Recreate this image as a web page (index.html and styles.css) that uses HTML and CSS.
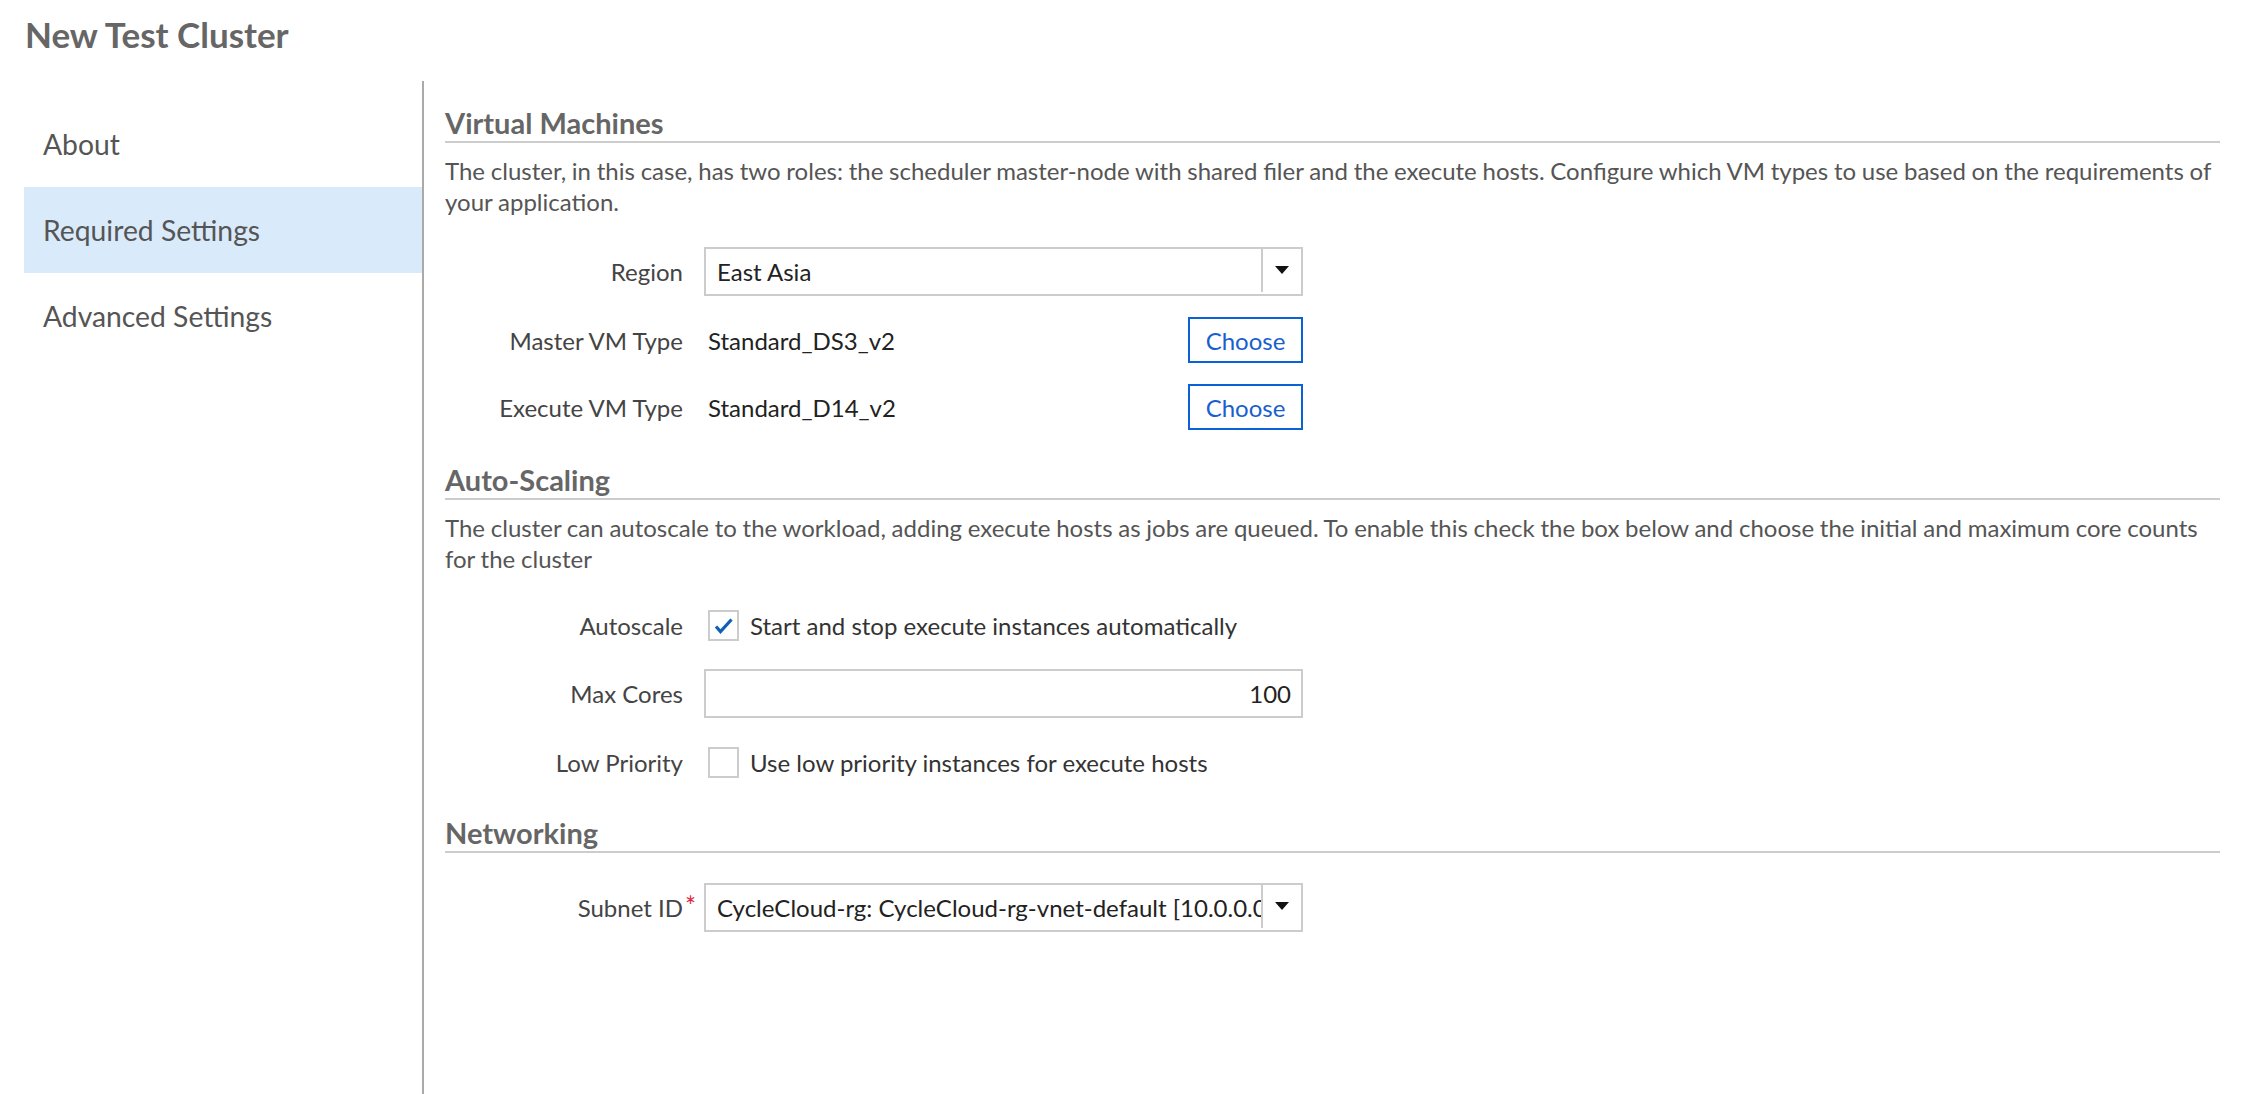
FILE: index.html
```html
<!DOCTYPE html>
<html lang="en">
<head>
<meta charset="utf-8">
<title>New Test Cluster</title>
<link rel="stylesheet" href="styles.css">
</head>
<body>
<div class="page">
  <header class="page-header">
    <h1 class="page-title">New Test Cluster</h1>
  </header>
  <div class="layout">
    <nav class="sidebar">
      <a class="nav-item">About</a>
      <a class="nav-item nav-item--active">Required Settings</a>
      <a class="nav-item">Advanced Settings</a>
    </nav>
    <main class="content">
      <section class="section">
        <h2 class="section-title">Virtual Machines</h2>
        <p class="section-desc">The cluster, in this case, has two roles: the scheduler master-node with shared filer and the execute hosts. Configure which VM types to use based on the requirements of your application.</p>
        <div class="form">
          <div class="field">
            <span class="field-label">Region</span>
            <div class="field-control">
              <div class="select">
                <span class="select-value">East Asia</span>
                <span class="select-toggle"><span class="caret"></span></span>
              </div>
            </div>
          </div>
          <div class="field">
            <span class="field-label">Master VM Type</span>
            <div class="field-control field-control--split">
              <span class="field-value">Standard_DS3_v2</span>
              <button class="btn" type="button">Choose</button>
            </div>
          </div>
          <div class="field">
            <span class="field-label">Execute VM Type</span>
            <div class="field-control field-control--split">
              <span class="field-value">Standard_D14_v2</span>
              <button class="btn" type="button">Choose</button>
            </div>
          </div>
        </div>
      </section>

      <section class="section">
        <h2 class="section-title">Auto-Scaling</h2>
        <p class="section-desc">The cluster can autoscale to the workload, adding execute hosts as jobs are queued. To enable this check the box below and choose the initial and maximum core counts for the cluster</p>
        <div class="form form--loose">
          <div class="field field--check">
            <span class="field-label">Autoscale</span>
            <div class="field-control">
              <span class="checkbox checkbox--checked">
                <svg viewBox="0 0 31 31" width="31" height="31" aria-hidden="true"><path d="M8 16.5 L12.5 21.5 L23.5 9.5" fill="none" stroke="#0f5fb5" stroke-width="3.2" stroke-linecap="butt" stroke-linejoin="miter"/></svg>
              </span>
              <span class="check-text">Start and stop execute instances automatically</span>
            </div>
          </div>
          <div class="field">
            <span class="field-label">Max Cores</span>
            <div class="field-control">
              <div class="input input--number">100</div>
            </div>
          </div>
          <div class="field field--check">
            <span class="field-label">Low Priority</span>
            <div class="field-control">
              <span class="checkbox"></span>
              <span class="check-text">Use low priority instances for execute hosts</span>
            </div>
          </div>
        </div>
      </section>

      <section class="section">
        <h2 class="section-title">Networking</h2>
        <div class="form">
          <div class="field">
            <span class="field-label"><span class="required">Subnet ID<span class="required-mark">*</span></span></span>
            <div class="field-control">
              <div class="select">
                <span class="select-value">CycleCloud-rg: CycleCloud-rg-vnet-default [10.0.0.0/24]</span>
                <span class="select-toggle"><span class="caret"></span></span>
              </div>
            </div>
          </div>
        </div>
      </section>
    </main>
  </div>
</div>
</body>
</html>
```

FILE: styles.css
```css
* { box-sizing: border-box; }

html, body {
  margin: 0;
  padding: 0;
  background: #ffffff;
}

body {
  font-family: "Lato", "Open Sans", "Liberation Sans", sans-serif;
  color: #444444;
}

.page {
  display: flex;
  flex-direction: column;
  height: 100vh;
}

.page-header {
  height: 81px;
  padding: 14px 25px 0 25px;
  flex: 0 0 auto;
}

.page-title {
  margin: 0;
  font-size: 35px;
  line-height: 40px;
  font-weight: 700;
  color: #666666;
}

.layout {
  flex: 1 1 auto;
  display: flex;
  min-height: 0;
}

.sidebar {
  flex: 0 0 400px;
  margin-left: 24px;
  border-right: 2px solid #aaaaaa;
  padding-top: 20px;
  display: flex;
  flex-direction: column;
}

.nav-item {
  height: 86px;
  display: flex;
  align-items: center;
  padding-left: 19px;
  font-size: 28.3px;
  color: #555555;
  cursor: pointer;
}

.nav-item--active {
  background: #d9eafb;
}

.content {
  flex: 1 1 auto;
  padding: 26px 42px 0 21px;
}

.section + .section {
  margin-top: 34px;
}

.section-title {
  margin: 0;
  font-size: 29px;
  line-height: 32px;
  font-weight: 700;
  color: #666666;
  padding-bottom: 2px;
  border-bottom: 2px solid #cccccc;
}

.section-desc {
  margin: 12px 0 0 0;
  font-size: 24px;
  line-height: 31px;
  word-spacing: -0.4px;
  color: #555555;
}

.form {
  margin-top: 30px;
  display: flex;
  flex-direction: column;
  gap: 21px;
}

.form--loose {
  gap: 23px;
}

.field {
  display: flex;
  align-items: center;
  gap: 21px;
}

.field--check {
  height: 42px;
}

.field-label {
  flex: 0 0 238px;
  text-align: right;
  font-size: 24px;
  color: #444444;
  white-space: nowrap;
}

.field-control {
  flex: 0 0 599px;
  width: 599px;
  display: flex;
  align-items: center;
  font-size: 24px;
}

.field-control--split {
  justify-content: space-between;
}

.field-value {
  padding-left: 4px;
  color: #222222;
}

.btn {
  width: 115px;
  height: 46px;
  border: 2px solid #0a62d6;
  background: #ffffff;
  color: #1a5fcf;
  font-family: inherit;
  font-size: 24px;
  padding: 0;
  cursor: pointer;
}

.select {
  width: 100%;
  height: 49px;
  border: 2px solid #cccccc;
  display: flex;
  align-items: stretch;
  background: #ffffff;
}

.select-value {
  flex: 1 1 auto;
  min-width: 0;
  display: flex;
  align-items: center;
  padding: 0 10px 0 11px;
  color: #222222;
  white-space: nowrap;
  overflow: hidden;
}

.select-toggle {
  flex: 0 0 40px;
  border-left: 2px solid #cccccc;
  display: flex;
  align-items: center;
  justify-content: center;
  margin-bottom: 2px;
}

.caret {
  width: 0;
  height: 0;
  border-left: 7px solid transparent;
  border-right: 7px solid transparent;
  border-top: 8px solid #111111;
  margin-top: -2px;
}

.input {
  width: 100%;
  height: 49px;
  border: 2px solid #cccccc;
  display: flex;
  align-items: center;
  padding: 0 10px;
  color: #222222;
}

.input--number {
  justify-content: flex-end;
}

.checkbox {
  flex: 0 0 31px;
  width: 31px;
  height: 31px;
  margin-left: 4px;
  border: 2px solid #cccccc;
  background: #ffffff;
  display: flex;
  align-items: center;
  justify-content: center;
}

.checkbox svg {
  display: block;
  flex: 0 0 auto;
}

.check-text {
  margin-left: 11px;
  color: #333333;
}

.required {
  position: relative;
}

.required-mark {
  position: absolute;
  left: 100%;
  top: -3px;
  margin-left: 2px;
  color: #e0223c;
  font-size: 26px;
}
```
